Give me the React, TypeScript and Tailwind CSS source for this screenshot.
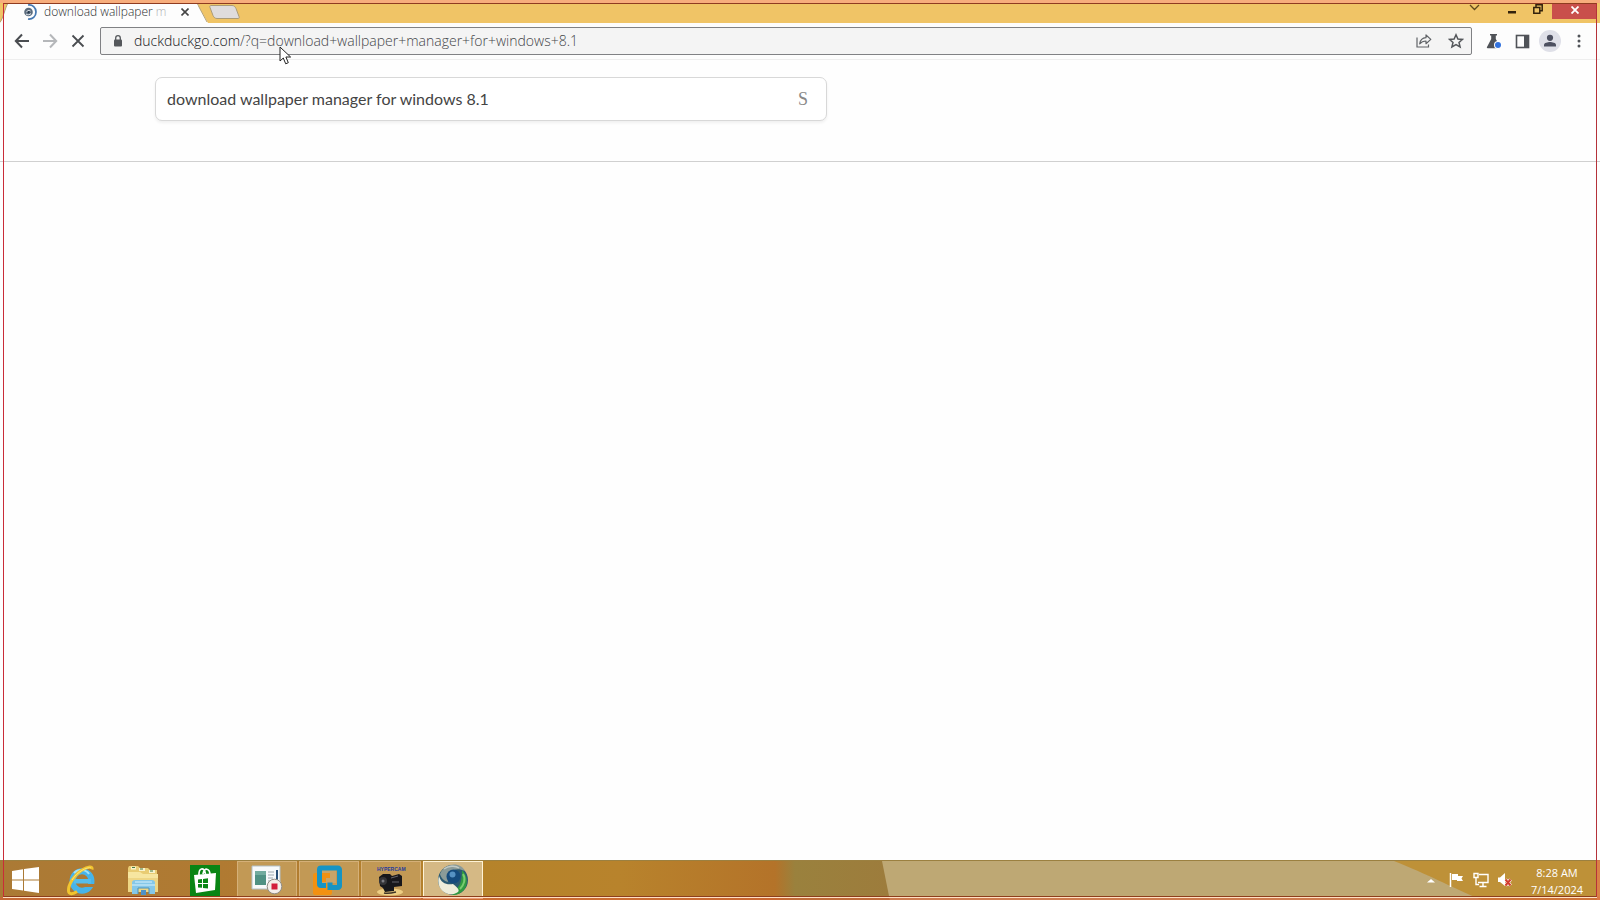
import React, { useState } from 'react';

const BackIcon = () => (
  <svg width="16" height="16" viewBox="0 0 16 16" fill="none" stroke="#4a4d51" strokeWidth="2">
    <path d="M15 8H2M8 1.5 1.8 8 8 14.5" />
  </svg>
);

const ForwardIcon = () => (
  <svg width="16" height="16" viewBox="0 0 16 16" fill="none" stroke="#b5b7ba" strokeWidth="2">
    <path d="M1 8h13M8 1.5 14.2 8 8 14.5" />
  </svg>
);

const StopIcon = () => (
  <svg width="14" height="14" viewBox="0 0 14 14" fill="none" stroke="#4a4d51" strokeWidth="1.8">
    <path d="M1.5 1.5l11 11M12.5 1.5l-11 11" />
  </svg>
);

const LockIcon = () => (
  <svg width="10" height="12" viewBox="0 0 10 12">
    <rect x="1" y="4.5" width="8" height="7" rx="1" fill="#54575b" />
    <path d="M2.7 5V3a2.3 2.3 0 0 1 4.6 0v2" fill="none" stroke="#54575b" strokeWidth="1.3" />
  </svg>
);

const ShareIcon = () => (
  <svg width="16" height="14" viewBox="0 0 16 14" fill="none" stroke="#606367" strokeWidth="1.2">
    <path d="M1 3.5V13h11.5v-2.5" />
    <path d="M10 1v2.7C6 4 4.2 6.3 3.7 9.8 5.5 7.6 7.3 7 10 7v2.7l4.8-4.3z" strokeLinejoin="round" />
  </svg>
);

const StarIcon = () => (
  <svg width="16" height="16" viewBox="0 0 16 16" fill="none" stroke="#54575b" strokeWidth="1.5">
    <path d="M8 1.8l1.9 4.2 4.6.4-3.5 3 1.1 4.5L8 11.5l-4.1 2.4L5 9.4l-3.5-3 4.600-.4z" />
  </svg>
);

const FlaskIcon = () => (
  <svg width="16" height="16" viewBox="0 0 16 16">
    <path d="M4 1h7v1.600H9.800V6l4.600 8c.4.700 0 1.200-.7 1.200H1.600c-.7 0-1-.5-.6-1.200l4.200-8V2.600H4z" fill="#505358" />
    <circle cx="12" cy="12" r="4" fill="#fff" />
    <circle cx="12" cy="12" r="3" fill="#3272dd" />
  </svg>
);

const SidePanelIcon = () => (
  <svg width="15" height="15" viewBox="0 0 15 15">
    <rect x="1.5" y="1.5" width="12" height="12" fill="none" stroke="#505358" strokeWidth="1.6" />
    <path d="M9 1.5h4.5v12H9z" fill="#505358" />
  </svg>
);

const ProfileIcon = () => (
  <svg width="22" height="22" viewBox="0 0 22 22">
    <circle cx="11" cy="11" r="11" fill="#dfe0e8" />
    <circle cx="11" cy="7.8" r="3.1" fill="#4d5060" />
    <path d="M5 16.5v-1.700c0-2 3.800-2.900 6-2.900s6 .9 6 2.900v1.700z" fill="#4d5060" />
  </svg>
);

const LoadingIcon = () => (
  <svg width="14" height="16" viewBox="0 0 14 16" fill="none">
    <path d="M5 1c4.500-.6 8 2.500 8 7s-3.500 7.500-8 7" stroke="#4477b0" strokeWidth="1.7" />
    <circle cx="5.5" cy="8" r="4.3" fill="#5b6b7c" />
    <path d="M3.500 8.200c.6-1.700 2.600-2.400 4-1.200M3 10c1.500 1.200 3.800 1 5-.5" stroke="#e8edf2" strokeWidth="1" />
    <circle cx="5.6" cy="8.2" r="1.1" fill="#26394d" />
  </svg>
);

const WindowsIcon = () => (
  <svg width="27" height="26" viewBox="0 0 27 26" fill="#fff">
    <path d="M0 4l11-1.700v10.200H0zM12 2.100L27 0v12.500H12zM0 13.500h11v10L0 22zM12 13.500h15V26l-15-2.300z" />
  </svg>
);

const ExplorerIcon = () => (
  <svg width="30" height="31" viewBox="0 0 30 31">
    <ellipse cx="16" cy="16" rx="9.5" ry="9.8" fill="none" stroke="#46b4ea" strokeWidth="6" />
    <path d="M8 14h17v4.500H8z" fill="#55bdec" />
    <path d="M18 19h11v3H18z" fill="#b07a35" />
    <path d="M8 8c4-4 12-4 15 1" stroke="#a5e0f8" strokeWidth="2" fill="none" />
    <path d="M26 4.500C27 1 22 1 16 5 8 10 2 20 2.500 26c.3 4 5 3 8.500.5" fill="none" stroke="#f2c52f" strokeWidth="3" />
    <path d="M25 3C21 1.500 11 7 6 15" fill="none" stroke="#fbe77b" strokeWidth="1" />
  </svg>
);

const FolderIcon = () => (
  <svg width="32" height="30" viewBox="0 0 32 30">
    <path d="M1 3l1-2h9l2 2h8l2 2h7v20H1z" fill="#e9cc73" />
    <path d="M4 1.500h5v3H4zM12 3h6v3h-6zM22 5h6v3h-6z" fill="#f9f3cc" />
    <path d="M5 2h3v1H5zM13 3.500h3v1h-3zM23 5.500h3v1h-3z" fill="#457c47" />
    <path d="M1 7h12l3 2h15v18H1z" fill="#f7e6a0" />
    <path d="M1 13h30v14H1z" fill="#eed685" />
    <path d="M5 29V18c0-2 1-3 3-3h17c2 0 3 1 3 3v11h-6v-6H11v6z" fill="#85c7e8" />
    <path d="M5 20h23M8 17h17" stroke="#d7f1fb" strokeWidth="1.2" />
    <path d="M11 29v-6h11v6" stroke="#4b91b9" fill="none" />
    <path d="M14 25h5v5h-5z" fill="#4e91c6" />
  </svg>
);

const StoreIcon = () => (
  <svg width="30" height="31" viewBox="0 0 30 31">
    <path d="M0 0h30v31H0z" fill="#098514" />
    <path d="M4 10l22-2-1 17-19 3z" fill="#fff" />
    <path d="M9 11c-.5-9 5-9 6.500-2M13 9c1-7 7-6 7 1" stroke="#fff" strokeWidth="1.7" fill="none" />
    <path d="M8 14.500l4-.5v4H8zM13 13.900l5-.6v4.700h-5zM8 19h4v3.800l-4-.3zM13 19h5v4.500l-5-.6z" fill="#098514" />
  </svg>
);

const RecorderIcon = () => (
  <svg width="32" height="30" viewBox="0 0 32 30">
    <path d="M1 1h28v23H1z" fill="#f7f9fa" stroke="#b3c1c9" />
    <path d="M4 6h11v14H4z" fill="#4f9183" />
    <path d="M4 6h11v4H4z" fill="#71ab9e" />
    <path d="M17 7h6M17 10h6M17 13h5M17 16h4" stroke="#9da8af" />
    <path d="M26 5v10" stroke="#294f76" strokeWidth="2" />
    <circle cx="23.5" cy="21.5" r="7.3" fill="#f4eee9" stroke="#8f8c85" />
    <path d="M20.500 18.500h6v6h-6z" fill="#d31e3b" />
  </svg>
);

const VmwareIcon = () => (
  <svg width="38" height="34" viewBox="0 0 38 34" fill="none">
    <path d="M3 12a2 2 0 0 1 2-2h12v14h5v6a2 2 0 0 1-2 2H5a2 2 0 0 1-2-2z" fill="#f29111" />
    <path d="M12 7h14v13H12z" fill="#c9a468" />
    <path d="M12 10h8v5h-4v4h-4z" fill="#f29111" />
    <path d="M16 22.500h-5a1.500 1.500 0 0 1-1.500-1.500V6.500A1.500 1.500 0 0 1 11 5h17a1.500 1.500 0 0 1 1.500 1.500V23a1.500 1.500 0 0 1-1.500 1.500h-8v-5" stroke="#1694c4" strokeWidth="5" />
  </svg>
);

const HyperCamIcon = () => (
  <svg width="32" height="31" viewBox="0 0 32 31">
    <text x="2" y="6" fontFamily="Liberation Sans, sans-serif" fontSize="5" fontWeight="700" fill="#253b9d">HYPERCAM</text>
    <ellipse cx="15" cy="27" rx="13" ry="3.5" fill="#edcd83" />
    <path d="M4 12l4-3h7l2 2 7-2 3 2v10l-8 1v4l-9 1-2-4-3-2z" fill="#17171b" />
    <circle cx="8" cy="16" r="4" fill="#343438" />
    <circle cx="8" cy="16" r="1.5" fill="#7b7b82" />
    <path d="M16 13l7-2M17 17h7" stroke="#65656c" />
    <path d="M9 28c4 1 8 0 12-1" stroke="#3e3426" strokeWidth="1.5" fill="none" />
  </svg>
);

const BrowserIcon = () => (
  <svg width="32" height="32" viewBox="0 0 32 32">
    <circle cx="16" cy="16" r="15" fill="#2b5a72" />
    <path d="M25 6c9 9 5 24-8 25-3 0-3-2 0-4 6-4 8-10 8-21z" fill="#2f9a41" />
    <path d="M26 10c3 5 1 11-3 15" stroke="#78cb70" strokeWidth="2" fill="none" />
    <path d="M2 12c2 7 7 9 14 8 4 3 7 6 5 8C11 35-2 25 2 12z" fill="#eeeddb" />
    <path d="M3 10C8-2 24-2 28 7c-5-2-8-2-11-1C11 7 10 13 11 18 7 17 4 14 3 10z" fill="#8b9b98" />
    <circle cx="16.5" cy="12.5" r="7" fill="#154b7d" />
    <circle cx="15.5" cy="10.5" r="3" fill="#5692c3" />
    <path d="M7 5c4-3 11-4 15-1" stroke="#c3cbc5" strokeWidth="1.5" fill="none" />
  </svg>
);

const FlagIcon = () => (
  <svg width="15" height="16" viewBox="0 0 15 16">
    <path d="M1.500 1v14" stroke="#fff" strokeWidth="1.5" />
    <path d="M3 2h6v2h5l-1.500 2.500L14 9H8V8H3z" fill="#fff" />
  </svg>
);

const NetworkIcon = () => (
  <svg width="16" height="16" viewBox="0 0 16 16" fill="none" stroke="#fff" strokeWidth="1.4">
    <path d="M6 2.500h9v8H5M10 10.500v4M6.500 14.500h7" />
    <path d="M1 1.500h4v4H1zM3 5.500v7h3" />
  </svg>
);

const MutedIcon = () => (
  <svg width="16" height="16" viewBox="0 0 16 16">
    <path d="M1 5.500h2L8 1v13L3 10H1z" fill="#fff" />
    <path d="M8.500 7.500l5 6M13.500 7.500l-5 6" stroke="#fff" strokeWidth="3.5" />
    <path d="M8.500 7.500l5 6M13.500 7.500l-5 6" stroke="#d33c2c" strokeWidth="2" />
  </svg>
);

const TitleBar = () => (
  <header className="flex h-[23px] shrink-0 justify-between bg-[#f0c466] font-['Open_Sans','Noto_Sans',sans-serif]">
    <div className="flex">
      <div className="relative flex h-[23px] w-[209px] items-center pl-[23px]">
        <svg className="absolute inset-0" width="209" height="23" viewBox="0 0 209 23">
          <path d="M0 23C3 20 5 8 8 3h187c3 0 3 2 4 4l9 16z" fill="#fdfdfd" />
          <path d="M0 22C3 19 5 8 8 3M195 3c3 0 3 2 4 4l8 15" fill="none" stroke="#b4a27b" />
        </svg>
        <div className="relative flex items-center">
          <LoadingIcon />
          <span className="ml-[7px] w-[124px] whitespace-nowrap text-[12px] leading-4 font-light text-[#2c2d2f]">
            download wallpaper <span className="text-[#b0b0b2]">m</span>
          </span>
          <button aria-label="Close tab" className="ml-[13px]">
            <svg width="8" height="8" viewBox="0 0 8 8" stroke="#444" strokeWidth="1.6">
              <path d="M.5.5l7 7M7.500.5l-7 7" />
            </svg>
          </button>
        </div>
      </div>
      <button aria-label="New tab" className="flex items-start pt-[5px]">
        <svg width="31" height="14" viewBox="0 0 31 14">
          <path d="M2 .5h21c2 0 3 1 4 3l3 8c.5 1.500 0 2-1 2H8c-2 0-3-1-4-3L1 2.500C.5 1 1 .5 2 .5z" fill="#dfdcdc" stroke="#aa9b78" />
        </svg>
      </button>
    </div>
    <div className="flex items-start pr-[3px]">
      <button aria-label="Search tabs" className="mr-[28px] pt-[4px]">
        <svg width="11" height="7" viewBox="0 0 11 7" fill="none" stroke="#5e491c" strokeWidth="1.3">
          <path d="M1 1l4.500 4.500L10 1" />
        </svg>
      </button>
      <button aria-label="Minimize" className="mr-[17px] pt-[11px]">
        <svg width="8" height="3" viewBox="0 0 8 3"><path d="M0 0h8v2.500H0z" fill="#33220c" /></svg>
      </button>
      <button aria-label="Restore" className="mr-[9px] pt-[4px]">
        <svg width="10" height="10" viewBox="0 0 10 10" fill="none" stroke="#33220c" strokeWidth="1.5">
          <path d="M.8 3.500h6v5.700h-6zM3 3V.8h6.200v6H7" />
        </svg>
      </button>
      <button aria-label="Close window" className="flex h-[19px] w-[45px] items-center justify-center bg-[#c94f4b]">
        <svg width="8" height="8" viewBox="0 0 8 8" stroke="#fff" strokeWidth="1.8"><path d="M.5.5l7 7M7.500.5l-7 7" /></svg>
      </button>
    </div>
  </header>
);

const Toolbar = () => {
  const [path, setPath] = useState('/?q=download+wallpaper+manager+for+windows+8.1');

  return (
    <nav className="flex h-[37px] shrink-0 items-center border-b border-[#eeeeee] bg-[#fdfdfd] pr-[19px] pl-[14px]">
      <div className="mr-[15px] flex items-center gap-[12px]">
        <button aria-label="Back"><BackIcon /></button>
        <button aria-label="Forward"><ForwardIcon /></button>
        <button aria-label="Stop" className="pl-px"><StopIcon /></button>
      </div>
      <div className="flex h-[28px] flex-1 items-center rounded-[2px] border border-[#808184] bg-[#f4f4f4] pr-[7px] pl-[12px] font-['Open_Sans','Noto_Sans',sans-serif] text-[14px] leading-5 font-light">
        <LockIcon />
        <label htmlFor="url" className="ml-[11px] text-[#111214]">duckduckgo.com</label>
        <input
          id="url"
          className="min-w-0 flex-1 bg-transparent text-[#444649] outline-none"
          value={path}
          onChange={e => setPath(e.target.value)}
        />
        <button aria-label="Share" className="mr-[16px]"><ShareIcon /></button>
        <button aria-label="Bookmark"><StarIcon /></button>
      </div>
      <div className="flex items-center pl-[14px]">
        <button aria-label="Experiments" className="mr-[13px]"><FlaskIcon /></button>
        <button aria-label="Side panel" className="mr-[9px]"><SidePanelIcon /></button>
        <button aria-label="Profile" className="mr-[16px]"><ProfileIcon /></button>
        <button aria-label="Menu">
          <svg width="4" height="14" viewBox="0 0 4 14" fill="#505358">
            <circle cx="2" cy="2" r="1.5" /><circle cx="2" cy="7" r="1.5" /><circle cx="2" cy="12" r="1.5" />
          </svg>
        </button>
      </div>
    </nav>
  );
};

const SearchPage = () => {
  const [query, setQuery] = useState('download wallpaper manager for windows 8.1');

  return (
    <main className="flex-1 bg-[#fefefe]">
      <div className="h-[102px] border-b border-[#d0d0d0] pt-[17px] pl-[155px]">
        <form className="flex h-[44px] w-[672px] items-center rounded-[7px] border border-[#d8d8d8] bg-white pr-[18px] pl-[11px] shadow-[0_2px_3px_rgba(0,0,0,0.06)]">
          <input
            aria-label="Search"
            className="min-w-0 flex-1 bg-transparent font-['Lato',sans-serif] text-[16px] leading-6 text-[#444] outline-none"
            value={query}
            onChange={e => setQuery(e.target.value)}
          />
          <button type="button" className="font-['Liberation_Serif',serif] text-[18px] leading-6 text-[#888]">S</button>
        </form>
      </div>
    </main>
  );
};

const pinned = [
  { label: 'Start', icon: <WindowsIcon />, className: 'w-[50px]' },
  { label: 'Internet Explorer', icon: <ExplorerIcon />, className: 'w-[62px]' },
  { label: 'File Explorer', icon: <FolderIcon />, className: 'w-[62px]' },
  { label: 'Store', icon: <StoreIcon />, className: 'w-[62px]' },
];

const running = [
  { label: 'Recorder', icon: <RecorderIcon />, active: false },
  { label: 'VMware', icon: <VmwareIcon />, active: false },
  { label: 'HyperCam', icon: <HyperCamIcon />, active: false },
  { label: 'Browser', icon: <BrowserIcon />, active: true },
];

const TaskBar = () => (
  <footer className="relative flex h-[40px] shrink-0 justify-between overflow-hidden border-t border-[#9b8040] bg-[linear-gradient(to_right,#ab7a35_0,#b07a32_220px,#b5832a_480px,#b8832c_620px,#b47329_775px,#9a813d_795px,#9d7c3c_890px,#bba675_890px,#bca773_1250px,#b9a06c_100%)]">
    <svg className="absolute inset-y-0 right-0" width="718" height="40" viewBox="0 0 718 40">
      <path d="M0 0l8 40H718V0z" fill="#bea874" />
      <path d="M512 0c35 14 55 25 90 40h116V0z" fill="#be9138" />
    </svg>
    <div className="relative flex">
      {pinned.map(app => (
        <button key={app.label} aria-label={app.label} className={`flex h-[38px] items-center justify-center ${app.className}`}>
          {app.icon}
        </button>
      ))}
      <div className="flex gap-[2px] pl-[1px]">
        {running.map(app => (
          <button
            key={app.label}
            aria-label={app.label}
            className={`flex h-[38px] w-[60px] items-center justify-center border ${app.active ? 'border-[#fff3d6] bg-[#d5b985]' : 'border-[#d5b078] bg-[#c29955]'}`}
          >
            {app.icon}
          </button>
        ))}
      </div>
    </div>
    <div className="relative flex h-[38px] items-center pr-[14px] font-['Open_Sans','Noto_Sans',sans-serif] text-white">
      <button aria-label="Show hidden icons" className="mr-[13px]">
        <svg width="10" height="5" viewBox="0 0 10 5" fill="#fff"><path d="M1 4.500L5 1l4 3.500z" /></svg>
      </button>
      <button aria-label="Action center" className="mr-[9px]"><FlagIcon /></button>
      <button aria-label="Network" className="mr-[8px]"><NetworkIcon /></button>
      <button aria-label="Volume" className="mr-[15px]"><MutedIcon /></button>
      <time className="flex w-[58px] flex-col items-center pt-[2px] text-[11px] leading-[17px]">
        <span>8:28 AM</span>
        <span>7/14/2024</span>
      </time>
    </div>
  </footer>
);

const App: React.FC = () => {
  return (
    <div className="relative flex h-screen flex-col overflow-hidden bg-white">
      <TitleBar />
      <Toolbar />
      <SearchPage />
      <TaskBar />

      {/* recording area frame */}
      <div className="pointer-events-none absolute inset-x-0 top-0 h-[3px] bg-[#f7ad7c]" />
      <div className="pointer-events-none absolute inset-x-0 bottom-0 h-[3px] bg-[#d95f37]/60" />
      <div className="pointer-events-none absolute right-0 bottom-0 h-[40px] w-[3px] bg-[#e67a4c]/70" />
      <div className="pointer-events-none absolute inset-[3px] border border-t-[#8f3b20] border-r-[#b5323a] border-b-[#8d3e1b] border-l-[#c92c38]" />
      <div className="pointer-events-none absolute inset-x-[3px] bottom-[2px] h-px bg-[#ffe0c4]" />

      {/* mouse pointer */}
      <svg className="pointer-events-none absolute top-[46px] left-[279px]" width="13" height="19" viewBox="0 0 13 19">
        <path d="M1 1v14l3.300-3 2.400 5.800 2.600-1.100L6.900 11H11.600z" fill="#fff" stroke="#222" />
      </svg>
    </div>
  );
};

export default App;
